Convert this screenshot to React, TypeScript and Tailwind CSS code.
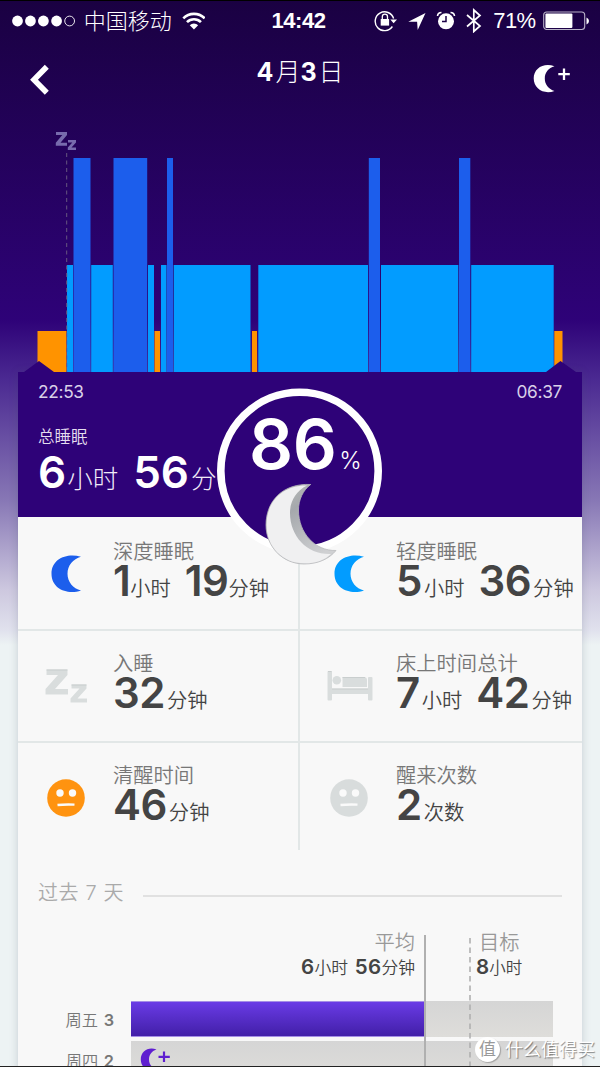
import { ReactNode } from 'react';
import { clsx } from 'clsx';

type Segment = { value: string; unit: string };

interface Stat {
  label: string;
  icon: ReactNode;
  segments: Segment[];
}

// Sleep phases, x range in px from the left edge of the chart
const PHASES = [
  { from: 37.5, to: 66.5, kind: 'awake' },
  { from: 67, to: 73, kind: 'light' },
  { from: 73.5, to: 90.5, kind: 'deep' },
  { from: 91.2, to: 112.8, kind: 'light' },
  { from: 113.5, to: 147.2, kind: 'deep' },
  { from: 148, to: 154, kind: 'light' },
  { from: 154.5, to: 160, kind: 'awake' },
  { from: 161, to: 166.5, kind: 'light' },
  { from: 167, to: 173, kind: 'deep' },
  { from: 173.7, to: 250.5, kind: 'light' },
  { from: 252, to: 257, kind: 'awake' },
  { from: 258.3, to: 368, kind: 'light' },
  { from: 368.8, to: 380, kind: 'deep' },
  { from: 381, to: 458.3, kind: 'light' },
  { from: 459, to: 470.3, kind: 'deep' },
  { from: 471.2, to: 553.7, kind: 'light' },
  { from: 554.3, to: 562.5, kind: 'awake' },
];

const PHASE_TOP: Record<string, number> = { deep: 38, light: 145, awake: 211 };
const PHASE_COLOR: Record<string, string> = {
  deep: '#1c5eec',
  light: '#029cff',
  awake: '#ff9300',
};

function Crescent({ color }: { color: string }) {
  return (
    <svg width="30" height="38" viewBox="0 0 30 38" fill={color} className="mt-px">
      <path d="M30 1.8C17 -2.5 0.5 3 0.5 18.8C0.5 34.5 17 40 30 35.5C22 33.5 16.5 27 16.5 18.8C16.5 10.5 22 4 30 1.8Z" />
    </svg>
  );
}

function Face({ color }: { color: string }) {
  return (
    <svg width="38" height="38" viewBox="0 0 38 38" className="mt-[2px]">
      <circle cx="19" cy="19" r="18.8" fill={color} />
      <circle cx="13" cy="14" r="3.7" fill="#fafafa" />
      <circle cx="25.5" cy="14" r="3.7" fill="#fafafa" />
      <path d="M10.5 26C16 25.4 22 25.4 27.5 25.6" stroke="#fafafa" strokeWidth="2.4" fill="none" />
    </svg>
  );
}

function Zz() {
  return (
    <svg width="43" height="34" viewBox="0 0 43 34" fill="#d9dddd">
      <path d="M1.5 0.5H22.5V6L10 20H23V25.5H0.5V20L13 6H1.5Z" />
      <path d="M26.5 15.5H41.5V19.5L32.5 29.5H42V33.5H25.5V29.5L34.5 19.5H26.5Z" />
      <path d="M1.5 1H22.5M26.5 16H41.5" stroke="#c8cdcd" strokeWidth="1" />
    </svg>
  );
}

function Bed() {
  return (
    <svg width="46" height="30" viewBox="0 0 46 30" fill="#d9dddd" className="ml-px">
      <rect x="0.5" y="0" width="4.5" height="29.5" rx="1" />
      <rect x="41" y="6" width="4.5" height="23.5" rx="1" />
      <rect x="3" y="17.5" width="40" height="5.5" />
      <circle cx="9.8" cy="9.3" r="4.3" />
      <path d="M15.5 6H37Q40 6 40 9V16H15.5Z" />
      <path d="M1 0.5H4.5M15.5 6.5H38M5 18H41" stroke="#c5caca" strokeWidth="0.8" />
    </svg>
  );
}

const STATS: Stat[] = [
  {
    label: '深度睡眠',
    icon: <Crescent color="#1c5eec" />,
    segments: [{ value: '1', unit: '小时' }, { value: '19', unit: '分钟' }],
  },
  {
    label: '轻度睡眠',
    icon: <Crescent color="#029cff" />,
    segments: [{ value: '5', unit: '小时' }, { value: '36', unit: '分钟' }],
  },
  { label: '入睡', icon: <Zz />, segments: [{ value: '32', unit: '分钟' }] },
  {
    label: '床上时间总计',
    icon: <Bed />,
    segments: [{ value: '7', unit: '小时' }, { value: '42', unit: '分钟' }],
  },
  { label: '清醒时间', icon: <Face color="#ff9310" />, segments: [{ value: '46', unit: '分钟' }] },
  { label: '醒来次数', icon: <Face color="#d8dcdc" />, segments: [{ value: '2', unit: '次数' }] },
];

function StatusBar() {
  return (
    <div className="flex h-10 items-center border-t border-black pl-3 pr-2.5 text-white">
      <svg width="64" height="12" viewBox="0 0 64 12" fill="#fff">
        {[5.5, 18.5, 31.5, 44.7].map((cx) => (
          <circle key={cx} cx={cx} cy="6" r="5.4" />
        ))}
        <circle cx="57.8" cy="6" r="4.9" fill="none" stroke="#fff" strokeWidth="0.9" />
      </svg>
      <span className="ml-2 w-[98px] text-[22px] font-light leading-none">中国移动</span>
      <svg width="24" height="18" viewBox="0 0 24 18" fill="none" stroke="#fff" strokeWidth="2.6">
        <path d="M1.3 6.3A15 15 0 0 1 22.7 6.3" />
        <path d="M5 10.2A9.8 9.8 0 0 1 19 10.2" />
        <path d="M12 17.5L7.8 13.3A6 6 0 0 1 16.2 13.3Z" fill="#fff" stroke="none" />
      </svg>
      <span className="ml-[66px] w-[103px] font-['Liberation_Sans',sans-serif] text-[22px] font-bold leading-none tracking-[-0.4px]">
        14:42
      </span>
      <svg width="108" height="26" viewBox="0 0 108 26" className="mb-[2px] shrink-0">
        {/* rotation lock */}
        <path d="M18.4 19.5A9.4 9.4 0 1 1 19.6 11.5" fill="none" stroke="#fff" strokeWidth="1.4" />
        <path d="M16.3 12.4H23L19.6 16.2Z" fill="#fff" />
        <rect x="6.7" y="12" width="8.4" height="6.6" fill="#fff" />
        <path d="M8.3 12V9.8A2.6 2.6 0 0 1 13.5 9.8V12" fill="none" stroke="#fff" strokeWidth="1.3" />
        {/* location arrow */}
        <path d="M51.5 6L34.3 14.8H43.1L43.7 23Z" fill="#fff" />
        {/* alarm */}
        <circle cx="72" cy="14.3" r="8" fill="#fff" />
        <path d="M72 9V14.5H68" fill="none" stroke="#1c0247" strokeWidth="1.5" />
        <path d="M63.5 9A4 4 0 0 1 67.5 5.5M76.5 5.5A4 4 0 0 1 80.5 9" fill="none" stroke="#fff" strokeWidth="1.6" />
        {/* bluetooth */}
        <path
          d="M93 8L106 19L99.8 24.5V3L106 8.5L93 19.5"
          fill="none"
          stroke="#fff"
          strokeWidth="1.7"
        />
      </svg>
      <span className="ml-[11px] w-[50px] font-['Liberation_Sans',sans-serif] text-[22px] leading-none tracking-[-0.5px]">
        71%
      </span>
      <svg width="47" height="20" viewBox="0 0 47 20" className="shrink-0">
        <rect x="0.7" y="1" width="41" height="17.5" rx="3" fill="none" stroke="#b9b2c8" strokeWidth="1.1" />
        <rect x="2.4" y="2.6" width="27" height="14.3" rx="1" fill="#fff" />
        <path d="M43.5 6.5Q46 7.5 46 10Q46 12.5 43.5 13.5Z" fill="#fff" />
      </svg>
    </div>
  );
}

function Header() {
  return (
    <header className="flex h-[80px] items-start justify-between px-7 text-white">
      <button aria-label="back" className="mt-[24px] w-[60px]">
        <svg width="22" height="32" viewBox="0 0 22 32" fill="none" stroke="#fff" strokeWidth="5.6">
          <path d="M18.8 2.8L6 15.8L18.8 28.8" />
        </svg>
      </button>
      <h1 className="mt-[20px] flex items-baseline text-[25px] leading-none">
        <b>4</b>
        <span className="ml-[2px] font-light">月</span>
        <b>3</b>
        <span className="ml-[2px] font-light">日</span>
      </h1>
      <button aria-label="add sleep" className="mt-[24px] flex w-[60px] justify-end">
        <svg width="40" height="30" viewBox="0 0 40 30">
          <path d="M22.5 2.2C12 -1.8 1.7 4 1.7 14.3C1.7 25 12 30.8 22.5 27C16.5 25 12.8 20.5 12.8 14.5C12.8 8.5 16.5 4 22.5 2.2Z" fill="#fff" />
          <path d="M32 4.5V16M26.3 10.2H37.8" stroke="#fff" strokeWidth="2.3" />
        </svg>
      </button>
    </header>
  );
}

function SleepChart() {
  return (
    <svg width="600" height="252" viewBox="0 0 600 252" className="block">
      <g fill="#776bad">
        <path d="M56 12H67V15L60.5 22.7H67V25.7H55.8V22.7L62.3 15H56Z" />
        <path d="M68 20H76V22.5L71.5 27.6H76V30H67.8V27.6L72.3 22.5H68Z" />
      </g>
      {PHASES.map((p) => (
        <rect
          key={p.from}
          x={p.from}
          y={PHASE_TOP[p.kind]}
          width={p.to - p.from}
          height={252 - PHASE_TOP[p.kind]}
          fill={PHASE_COLOR[p.kind]}
        />
      ))}
      <path d="M66.7 33V252" stroke="#67577f" strokeWidth="1" strokeDasharray="4 3.5" />
      <path d="M24 252L39 241L54 252ZM546 252L560.5 241L576 252Z" fill="#2e0278" />
    </svg>
  );
}

function Duration({ segments }: { segments: Segment[] }) {
  return (
    <p className="-mt-[2px] flex items-baseline whitespace-nowrap text-[#444] leading-none">
      {segments.map((s, i) => (
        <span key={s.unit} className={clsx('flex items-baseline', i > 0 && 'ml-[14px]')}>
          <span className="text-[42px] font-semibold tracking-[-0.5px]">{s.value}</span>
          <span className={clsx('text-[20.3px] font-[350]', s.value.startsWith('1') ? 'ml-0' : 'ml-[2px]')}>
            {s.unit}
          </span>
        </span>
      ))}
    </p>
  );
}

function StatCell({ stat, index }: { stat: Stat; index: number }) {
  return (
    <div
      className={clsx(
        'flex border-[#e2e7e7]',
        index % 2 === 0 ? 'border-r-2' : 'pl-px',
        index < 4 ? 'border-b-2' : '',
      )}
    >
      <div className="flex w-[95px] shrink-0 items-center justify-center pl-px">{stat.icon}</div>
      <div className={index < 2 ? 'pt-[25px]' : 'pt-[23px]'}>
        <p className="text-[20.3px] font-[350] leading-[20px] text-[#777]">{stat.label}</p>
        <Duration segments={stat.segments} />
      </div>
    </div>
  );
}

function ScoreRing() {
  return (
    <div className="absolute left-[198px] top-[15px] h-[180px] w-[168px]">
      <svg width="168" height="180" viewBox="0 0 168 180" className="absolute inset-0">
        <defs>
          <linearGradient id="edge" x1="0" y1="0" x2="0.6" y2="1">
            <stop offset="0" stopColor="#c4c6c0" />
            <stop offset="0.4" stopColor="#a5a8ac" />
            <stop offset="1" stopColor="#cfd0d2" />
          </linearGradient>
        </defs>
        <circle cx="83.5" cy="84" r="78.7" fill="#2e0278" stroke="#fff" strokeWidth="7.6" />
        <path
          d="M94.7 97.5C67 96 50 114 50 138C50 160 67 177 88 177C102 177 113 172 120 163.5C99 164 82.5 146 82.5 123C82.5 113 87 103 94.7 97.5Z"
          fill="url(#edge)"
          stroke="#b9babc"
          strokeWidth="0.8"
        />
        <path
          d="M91 98.5C66 98 50.5 115 50.5 138C50.5 160 67 176.3 88 176.3C100 176.3 109 173 115 167C92 168 74 150 74 126C74 114 80 104 91 98.5Z"
          fill="#f0f0f1"
        />
      </svg>
      <div className="relative flex items-baseline pl-[33px] pt-[23px] leading-none text-white">
        <span className="text-[69px] font-semibold tracking-[-0.5px]">86</span>
        <span className="ml-[3px] text-[24px] font-light">%</span>
      </div>
    </div>
  );
}

function Summary() {
  return (
    <section className="relative z-10 h-[145px] bg-[#2e0278] px-5 text-white">
      <div className="flex justify-between pt-[11px] text-[17.3px] leading-[18px] tracking-[-0.3px] text-[#d9d0e8]">
        <span>22:53</span>
        <span>06:37</span>
      </div>
      <p className="mt-[28px] text-[16.5px] font-[350] leading-[17px] text-[#e5deef]">总睡眠</p>
      <p className="mt-[4px] flex items-baseline whitespace-nowrap leading-none">
        <span className="text-[44px] font-semibold">6</span>
        <span className="ml-px text-[25.5px] font-light text-[#f0ebf7]">小时</span>
        <span className="ml-[15px] text-[44px] font-semibold">56</span>
        <span className="ml-[2px] text-[25.5px] font-light text-[#f0ebf7]">分</span>
      </p>
      <ScoreRing />
    </section>
  );
}

function PastWeek() {
  return (
    <section className="pl-5">
      <div className="flex items-center pr-5 pt-[33px]">
        <h2 className="w-[105px] whitespace-nowrap text-[20px] font-[350] leading-[20px] tracking-[0.6px] text-[#aaa]">
          过去 7 天
        </h2>
        <div className="mt-[6px] h-[2px] flex-1 bg-[#e1e1e1]" />
      </div>
      <div className="relative mt-[30px]">
        <div className="flex h-[68px] leading-none text-[#999]">
          <div className="w-[377px] text-right">
            <p className="text-[20.3px] font-[350]">平均</p>
            <p className="mt-[4px] text-[16.8px] font-[350] text-[#444]">
              <b className="text-[20.5px] font-semibold tracking-[0.3px]">6</b>小时{' '}
              <b className="ml-[2px] text-[20.5px] font-semibold tracking-[0.3px]">56</b>分钟
            </p>
          </div>
          <div className="pl-[61px]">
            <p className="pl-[3px] text-[20.3px] font-[350]">目标</p>
            <p className="mt-[4px] text-[16.5px] font-[350] text-[#444]">
              <b className="text-[20.5px] font-semibold">8</b>小时
            </p>
          </div>
        </div>
        <div className="flex h-9 items-center">
          <span className="w-[76px] pt-[2px] text-right text-[16.3px] font-[350] leading-none text-[#777]">
            周五 <b className="ml-px font-semibold">3</b>
          </span>
          <div className="ml-[17px] h-9 w-[422px] bg-linear-to-b from-[#d5d5d5] to-[#deddda]">
            <div className="h-9 w-[293px] border-y border-[#a58ee6] bg-linear-to-b from-[#6a3be6] to-[#421fa8]" />
          </div>
        </div>
        <div className="mt-[4px] flex h-9 items-center">
          <span className="w-[76px] pt-[4px] text-right text-[16.3px] font-[350] leading-none text-[#777]">
            周四 <b className="ml-px font-semibold">2</b>
          </span>
          <div className="ml-[17px] h-9 w-[422px] bg-linear-to-b from-[#d5d5d5] to-[#deddda] pl-[9px] pt-[7px]">
            <svg width="32" height="24" viewBox="0 0 32 24">
              <path d="M16.5 1.5C8.5 -1.5 0.8 3 0.8 11.5C0.8 20 8.5 24 16.5 21C11.5 19.5 9 16 9 11.5C9 7 11.5 3 16.5 1.5Z" fill="#5f1fd0" />
              <path d="M24 3.5V14M18.5 8.8H29.8" stroke="#5f1fd0" strokeWidth="2.2" />
            </svg>
          </div>
        </div>
        {/* average and goal markers run across the bars */}
        <div className="absolute left-[386px] top-[2px] h-[160px] w-[2px] bg-[#b0b0b0]" />
        <svg width="2" height="160" className="absolute left-[431px] top-[5px]">
          <path d="M1 0V160" stroke="#b0b0b0" strokeWidth="1.6" strokeDasharray="5.5 4" />
        </svg>
      </div>
    </section>
  );
}

export default function App() {
  return (
    <div className="relative h-[1067px] w-[600px] overflow-hidden bg-[linear-gradient(180deg,#1a0142_0px,#2e0278_320px,#4b2a92_380px,#8777b5_500px,#cdc8df_590px,#e0e1ed_630px,#edf3f4_645px)] font-['Inter','Noto_Sans_CJK_SC',sans-serif]">
      <StatusBar />
      <Header />
      <SleepChart />
      <main className="mx-[18px] h-[700px] bg-[#f8f8f8] shadow-[0_0_8px_rgba(60,70,90,0.22)]">
        <Summary />
        <section className="grid grid-cols-[282px_282px] grid-rows-[114px_112px_107px]">
          {STATS.map((stat, i) => (
            <StatCell key={stat.label} stat={stat} index={i} />
          ))}
        </section>
        <PastWeek />
      </main>
      <div className="absolute bottom-0 left-0 h-px w-full bg-[#222]" />
      <div className="absolute bottom-[5px] left-[475px] flex items-center text-white">
        <span className="flex size-[25px] items-center justify-center rounded-full bg-white text-[17px] leading-none text-[#999] shadow-[1px_1px_1px_rgba(0,0,0,0.25)]">
          值
        </span>
        <span className="ml-[5px] whitespace-nowrap text-[18px] leading-none [text-shadow:1px_1px_1px_rgba(0,0,0,0.45)]">
          什么值得买
        </span>
      </div>
    </div>
  );
}
